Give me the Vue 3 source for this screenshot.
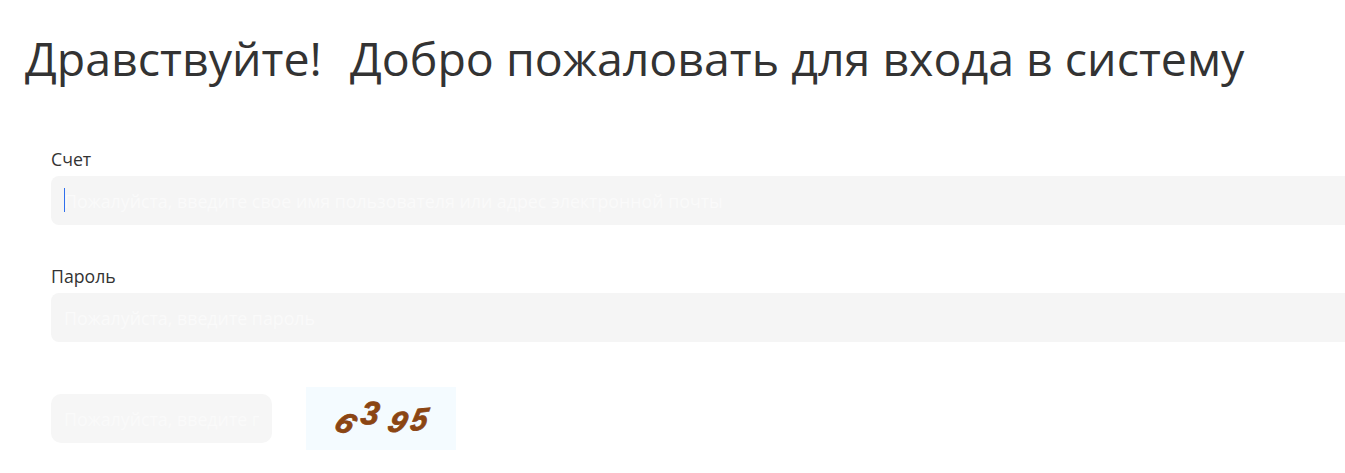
<script setup>
const digits = [
  { ch: '6', cls: 'd1' },
  { ch: '3', cls: 'd2' },
  { ch: '9', cls: 'd3' },
  { ch: '5', cls: 'd4' }
]
</script>

<template>
  <div class="page">
    <h1 class="title"><span class="greet">Дравствуйте!</span>&nbsp; Добро пожаловать для входа в систему</h1>
    <form class="form" @submit.prevent>
      <div class="field">
        <label class="label">Счет</label>
        <div class="input-wrap">
          <input class="input" type="text" placeholder="Пожалуйста, введите свое имя пользователя или адрес электронной почты" />
          <span class="caret"></span>
        </div>
      </div>
      <div class="field">
        <label class="label">Пароль</label>
        <div class="input-wrap">
          <input class="input" type="password" placeholder="Пожалуйста, введите пароль" />
        </div>
      </div>
      <div class="captcha-row">
        <input class="input code" type="text" placeholder="Пожалуйста, введите проверочный код" />
        <div class="captcha">
          <span v-for="d in digits" :key="d.ch" class="digit" :class="d.cls">{{ d.ch }}</span>
        </div>
      </div>
    </form>
  </div>
</template>

<style scoped>
.page {
  width: 1345px;
  height: 473px;
  overflow: hidden;
  background: #fff;
  font-family: "Open Sans", "Noto Sans", sans-serif;
  color: #333;
}
.title {
  margin: 0;
  padding: 26px 0 0 25px;
  font-size: 46.5px;
  line-height: 65px;
  font-weight: 400;
  white-space: nowrap;
  color: #333;
}
.greet {
  margin-right: 4px;
}
.form {
  width: 1500px;
  padding: 57px 0 0 51px;
}
.field {
  margin-bottom: 40px;
}
.label {
  display: block;
  height: 28px;
  font-size: 17.7px;
  line-height: 22px;
  color: #333;
}
.input-wrap {
  position: relative;
}
.input {
  display: block;
  box-sizing: border-box;
  width: 100%;
  height: 49px;
  padding: 0 13px;
  border: 0;
  outline: 0;
  border-radius: 8px;
  background: #f5f5f5;
  font-family: inherit;
  font-size: 17.8px;
}
.input::placeholder {
  color: #fafafa;
  opacity: 1;
}
.caret {
  position: absolute;
  left: 13px;
  top: 12px;
  width: 1px;
  height: 24px;
  background: #2f6fed;
}
.captcha-row {
  display: flex;
  align-items: flex-start;
  gap: 34px;
}
.code {
  flex: none;
  width: 221px;
  margin-top: 12px;
  border-radius: 10px;
  background: #f6f6f6;
}
.captcha {
  display: flex;
  flex: none;
  box-sizing: border-box;
  width: 150px;
  height: 63px;
  margin-top: 5px;
  padding: 17px 0 0 28px;
  background: #f4fbff;
  font-family: "Liberation Sans", sans-serif;
  font-weight: 700;
  font-style: italic;
  font-size: 29px;
  line-height: 30px;
  color: #8b4513;
  -webkit-text-stroke: 0.8px #8b4513;
}
.digit {
  display: block;
  width: 16px;
}
.d1 { transform: translate(-1px, 3px) rotate(24deg) skewX(-8deg) scale(1.05); }
.d2 { transform: translate(11px, -5px) rotate(2deg) skewX(-6deg) scale(1.12); }
.d3 { transform: translate(21px, 3px) rotate(8deg) skewX(-12deg) scale(1.05); }
.d4 { transform: translate(28px, 1px) rotate(-6deg) skewX(-16deg) scale(1.05); }
</style>

<style>
html, body { margin: 0; overflow: hidden; background: #fff; }
</style>
